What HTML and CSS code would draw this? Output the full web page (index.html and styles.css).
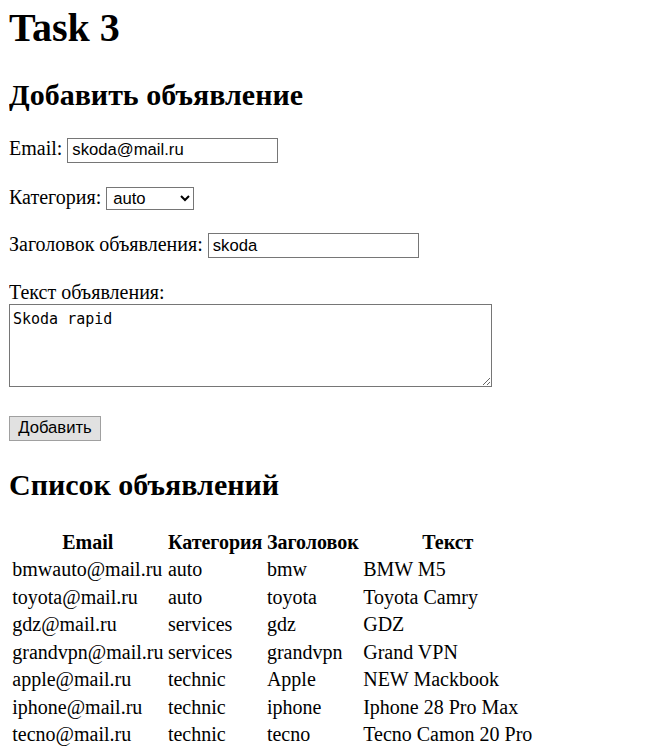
FILE: index.html
```html
<!DOCTYPE html>
<html lang="ru">
<head>
<meta charset="utf-8">
<title>Task 3</title>
<link rel="stylesheet" href="styles.css">
</head>
<body>
<h1 class="title">Task 3</h1>
<h2 class="section">Добавить объявление</h2>
<form class="ad-form">
  <p class="row">Email: <input class="field" type="text" value="skoda@mail.ru"></p>
  <p class="row">Категория: <select class="select"><option>auto</option><option>services</option><option>technic</option></select></p>
  <p class="row">Заголовок объявления: <input class="field" type="text" value="skoda"></p>
  <p class="row">Текст объявления:<br><textarea class="area">Skoda rapid</textarea></p>
  <p class="row"><button class="btn" type="button">Добавить</button></p>
</form>
<h2 class="section section-list">Список объявлений</h2>
<table class="ads">
  <thead>
    <tr><th>Email</th><th>Категория</th><th>Заголовок</th><th>Текст</th></tr>
  </thead>
  <tbody>
    <tr><td>bmwauto@mail.ru</td><td>auto</td><td>bmw</td><td>BMW M5</td></tr>
    <tr><td>toyota@mail.ru</td><td>auto</td><td>toyota</td><td>Toyota Camry</td></tr>
    <tr><td>gdz@mail.ru</td><td>services</td><td>gdz</td><td>GDZ</td></tr>
    <tr><td>grandvpn@mail.ru</td><td>services</td><td>grandvpn</td><td>Grand VPN</td></tr>
    <tr><td>apple@mail.ru</td><td>technic</td><td>Apple</td><td>NEW Mackbook</td></tr>
    <tr><td>iphone@mail.ru</td><td>technic</td><td>iphone</td><td>Iphone 28 Pro Max</td></tr>
    <tr><td>tecno@mail.ru</td><td>technic</td><td>tecno</td><td>Tecno Camon 20 Pro</td></tr>
  </tbody>
</table>
</body>
</html>
```

FILE: styles.css
```css
body {
  margin: 0 9px 10px 9px;
  font-family: "Liberation Serif", "Times New Roman", serif;
  font-size: 20px;
  color: #000;
  background: #fff;
}
.title {
  font-size: 40px;
  font-weight: bold;
  margin: 4px 0 27px 0;
}
.section {
  font-size: 30px;
  font-weight: bold;
  margin: 25px 0;
}
.section-list {
  margin-top: 27px;
  margin-bottom: 26px;
}
.row {
  margin: 23px 0;
}
.field {
  box-sizing: border-box;
  font-family: "Liberation Sans", Arial, sans-serif;
  font-size: 16.67px;
  width: 211px;
  height: 25px;
  padding: 1px 4px;
  border: 1px solid #767676;
  border-radius: 0;
  background: #fff;
  color: #000;
}
.select {
  box-sizing: border-box;
  font-family: "Liberation Sans", Arial, sans-serif;
  font-size: 16.67px;
  width: 88px;
  height: 23px;
  padding: 0 2px;
  border: 1px solid #767676;
  border-radius: 0;
  background-color: #fff;
  color: #000;
}
.area {
  box-sizing: border-box;
  display: inline-block;
  font-family: "DejaVu Sans Mono", "Liberation Mono", monospace;
  font-size: 15px;
  width: 483px;
  height: 83px;
  margin: 0;
  padding: 5px 3px 3px 3px;
  border: 1px solid #767676;
  border-radius: 0;
  color: #000;
}
.btn {
  box-sizing: border-box;
  font-family: "Liberation Sans", Arial, sans-serif;
  font-size: 16.67px;
  width: 92px;
  height: 25px;
  padding: 0;
  margin: 0;
  background: #e1e1e1;
  border: 1px solid #a0a0a0;
  border-radius: 0;
  color: #000;
}
.ads {
  border-spacing: 2.5px;
  margin-top: 0;
}
.ads th,
.ads td {
  padding: 1.25px;
}
.ads td {
  text-align: left;
}
```
